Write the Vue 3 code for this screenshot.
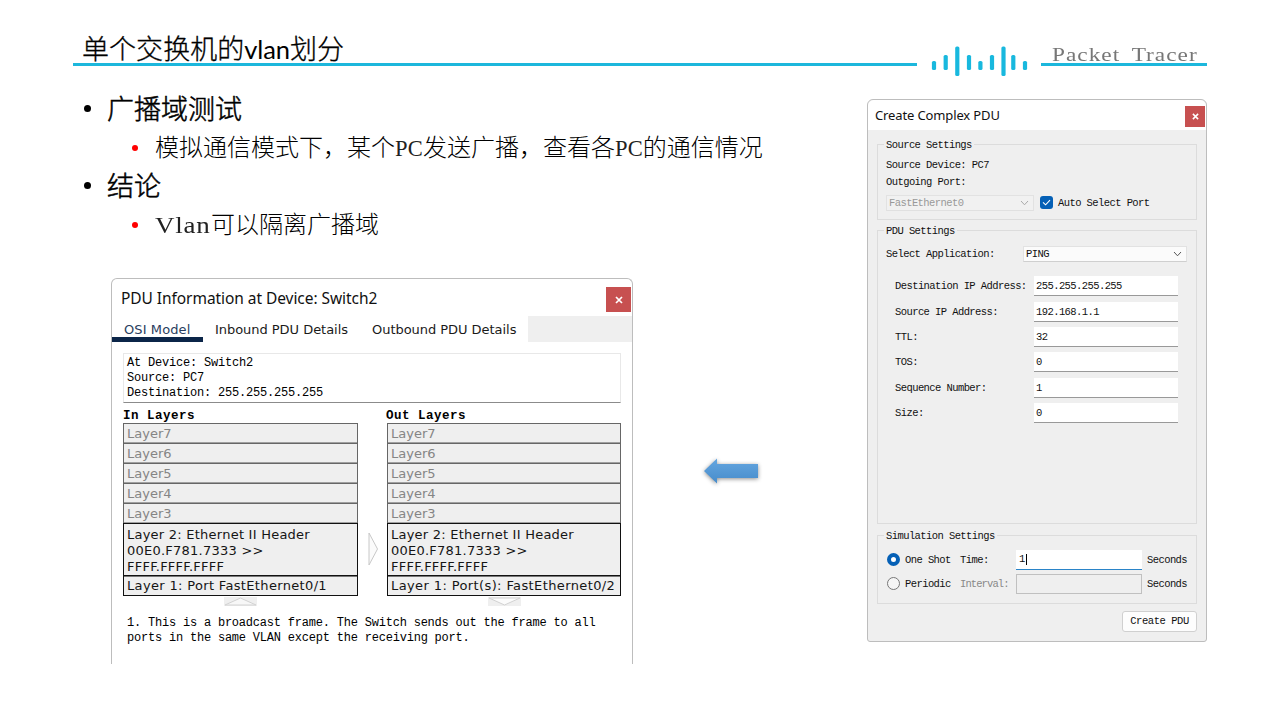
<script setup>
const bars = [
  [934, 61, 70], [945.7, 55, 70], [957.3, 46.5, 76], [969, 55, 70], [980.4, 61, 70],
  [992, 55, 70], [1003.5, 46.5, 76], [1013.3, 55, 70], [1025, 61, 70],
]
const upper = ['Layer7', 'Layer6', 'Layer5', 'Layer4', 'Layer3']
const fields = [
  ['Destination IP Address:', '255.255.255.255'],
  ['Source IP Address:', '192.168.1.1'],
  ['TTL:', '32'],
  ['TOS:', '0'],
  ['Sequence Number:', '1'],
  ['Size:', '0'],
]
</script>

<template>
  <div class="slide">
    <header class="head">
      <div class="title"><span>单个交换机的<span class="latin">vlan</span>划分</span></div>
      <svg class="wave" width="124" height="40" viewBox="917 40 124 40">
        <rect v-for="b in bars" :key="b[0]" :x="b[0] - 2.1" :y="b[1]" width="4.2" :height="b[2] - b[1]" rx="1.6" fill="#18b8de" />
      </svg>
      <div class="brand"><span>Packet Tracer</span></div>
    </header>

    <main class="content">
      <section class="left">
        <ul class="bullets">
          <li class="major"><i></i><span>广播域测试</span></li>
          <li class="minor"><i></i><span>模拟通信模式下，某个<b>PC</b>发送广播，查看各<b>PC</b>的通信情况</span></li>
          <li class="major"><i></i><span>结论</span></li>
          <li class="minor"><i></i><span><b class="wide">Vlan</b>可以隔离广播域</span></li>
        </ul>

        <div class="row">
          <div class="win info">
            <div class="bar">
              <span class="wtitle">PDU Information at Device: Switch2</span>
              <span class="close"><svg width="8" height="8" viewBox="0 0 8 8"><path d="M1 1L7 7M7 1L1 7" stroke="#fff" stroke-width="1.7" /></svg></span>
            </div>
            <nav class="tabs">
              <span class="tab on">OSI Model</span>
              <span class="tab t2">Inbound PDU Details</span>
              <span class="tab t3">Outbound PDU Details</span>
              <span class="rest"></span>
            </nav>
            <div class="summary">
              <div>At Device: Switch2</div>
              <div>Source: PC7</div>
              <div>Destination: 255.255.255.255</div>
            </div>
            <div class="stacks">
              <div class="stack">
                <h4>In Layers</h4>
                <div v-for="l in upper" :key="l" class="layer off">{{ l }}</div>
                <div class="layer big">Layer 2: Ethernet II Header<br>00E0.F781.7333 &gt;&gt;<br>FFFF.FFFF.FFFF</div>
                <div class="layer last">Layer 1: Port FastEthernet0/1</div>
                <svg class="tri" width="33" height="9" viewBox="0 0 33 9"><rect width="33" height="9" fill="#efefef" /><path d="M1 8L16.5 1L32 8Z" fill="#f7f7f7" stroke="#d2d2d2" /></svg>
              </div>
              <svg class="next" width="11" height="34" viewBox="0 0 11 34"><path d="M1 1L9.5 17L1 33Z" fill="#fbfbfb" stroke="#c8c8c8" /></svg>
              <div class="stack out">
                <h4>Out Layers</h4>
                <div v-for="l in upper" :key="l" class="layer off">{{ l }}</div>
                <div class="layer big">Layer 2: Ethernet II Header<br>00E0.F781.7333 &gt;&gt;<br>FFFF.FFFF.FFFF</div>
                <div class="layer last">Layer 1: Port(s): FastEthernet0/2</div>
                <svg class="tri" width="33" height="9" viewBox="0 0 33 9"><rect width="33" height="9" fill="#efefef" /><path d="M1 1L16.5 8L32 1Z" fill="#fbfbfb" stroke="#d2d2d2" /></svg>
              </div>
            </div>
            <div class="note">1. This is a broadcast frame. The Switch sends out the frame to all<br>ports in the same VLAN except the receiving port.</div>
          </div>
          <svg class="arrow" width="64" height="36" viewBox="0 0 64 36">
            <defs><linearGradient id="ag" x1="0" y1="0" x2="0" y2="1"><stop offset="0" stop-color="#65a6e0" /><stop offset="1" stop-color="#468ccb" /></linearGradient></defs>
            <path d="M4 17L17 4.500V10H58V24H17V29.500Z" fill="url(#ag)" />
          </svg>
        </div>
      </section>

      <section class="win pdu">
        <div class="bar">
          <span class="wtitle">Create Complex PDU</span>
          <span class="close"><svg width="7" height="7" viewBox="0 0 8 8"><path d="M1 1L7 7M7 1L1 7" stroke="#fff" stroke-width="1.7" /></svg></span>
        </div>
        <div class="body">
          <div class="group g1">
            <div class="legend"><span>Source Settings</span></div>
            <div class="line l1">Source Device: PC7</div>
            <div class="line l2">Outgoing Port:</div>
            <div class="port">
              <span class="select dis">FastEthernet0<svg width="9" height="6" viewBox="0 0 9 6"><path d="M1 1L4.500 4.800L8 1" fill="none" stroke="#aaa" /></svg></span>
              <span class="check"><svg width="9" height="7" viewBox="0 0 9 7"><path d="M1 3.300L3.600 5.800L8 1.200" fill="none" stroke="#fff" stroke-width="1.100" /></svg></span>
              <span>Auto Select Port</span>
            </div>
          </div>
          <div class="group g2">
            <div class="legend"><span>PDU Settings</span></div>
            <div class="app">
              <span>Select Application:</span>
              <span class="select">PING<svg width="9" height="6" viewBox="0 0 9 6"><path d="M1 1L4.500 4.800L8 1" fill="none" stroke="#555" /></svg></span>
            </div>
            <div v-for="f in fields" :key="f[0]" class="field"><span>{{ f[0] }}</span><span class="input">{{ f[1] }}</span></div>
          </div>
          <div class="group g3">
            <div class="legend"><span>Simulation Settings</span></div>
            <div class="sim"><span class="radio on"></span><span class="opt">One Shot</span><span class="lab">Time:</span><span class="tin">1<i class="caret"></i></span><span>Seconds</span></div>
            <div class="sim s2"><span class="radio"></span><span class="opt">Periodic</span><span class="lab gray">Interval:</span><span class="tin dis"></span><span>Seconds</span></div>
          </div>
          <div class="btn">Create PDU</div>
        </div>
      </section>
    </main>
  </div>
</template>

<style>
body { background: #fff; }
</style>

<style scoped>
* { box-sizing: border-box; }
.slide { width: 1280px; height: 720px; background: #fff; overflow: hidden; color: #000; white-space: nowrap; }
.head { display: flex; height: 99px; padding-left: 73px; align-items: flex-start; }
.title { width: 844px; height: 66px; border-bottom: 3px solid #1cb7dc; padding: 28px 0 0 9px; font: 300 27px/40px "Noto Sans CJK SC", sans-serif; letter-spacing: 0.05px; }
.title > span { -webkit-text-stroke: 0.3px #000; }
.title .latin { font-family: Lato, sans-serif; font-size: 25.500px; font-weight: 400; -webkit-text-stroke: 0 transparent; letter-spacing: -0.1px; }
.wave { margin-top: 40px; }
.brand { width: 166px; height: 66px; border-bottom: 3px solid #1cb7dc; padding: 44px 0 0 11px; font: 18.500px/22px "Liberation Serif", serif; letter-spacing: 0.8px; word-spacing: 4px; color: #777; }
.brand span { display: inline-block; transform: scaleX(1.26); transform-origin: 0 50%; }
.content { display: flex; }
.left { width: 867px; }
.bullets { list-style: none; margin: 0; padding: 0; height: 179px; }
.bullets li { display: flex; align-items: center; height: 38.5px; }
.bullets i { border-radius: 50%; flex: none; }
.major { padding-left: 84px; font: 400 27px/38px "Noto Sans CJK SC", sans-serif; }
.major i { width: 7px; height: 7px; background: #000; margin-right: 16px; }
.major span { font-weight: 300; -webkit-text-stroke: 0.5px #000; position: relative; top: -10px; }
.major i { position: relative; top: -10px; }
.minor { padding-left: 132px; font: 300 24px/38px "Noto Sans CJK SC", sans-serif; }
.minor i, .minor span { position: relative; top: -9px; }
.minor span { top: -11px; }
.minor i { width: 6px; height: 6px; background: #f00; margin-right: 17px; }
.minor b { font: 400 22.500px/30px "Liberation Serif", serif; letter-spacing: 0.2px; color: #222; }
.minor .wide { display: inline-block; width: 56px; letter-spacing: 0.6px; transform: scaleX(1.2); transform-origin: 0 50%; }
.row { display: flex; padding-left: 111px; }
.win { border: 1px solid #bdbdbd; background: #fff; }
.info { width: 522px; height: 386px; border-bottom: 0; border-radius: 6px 6px 0 0; }
.bar { display: flex; justify-content: space-between; }
.info .bar { height: 37px; padding: 8px 1px 0 9px; }
.wtitle { font: 16px/22px "Noto Sans", sans-serif; color: #111; }
.info .wtitle { font-size: 15.500px; line-height: 22px; letter-spacing: -0.060px; }
.close { display: flex; align-items: center; justify-content: center; background: #c75050; }
.info .close { width: 25px; height: 25px; }
.tabs { display: flex; height: 26px; font: 13px/28px "DejaVu Sans", sans-serif; color: #1a1a1a; }
.tab.on { width: 91px; padding-left: 12px; color: #2a3e60; border-bottom: 5px solid #0b2548; letter-spacing: 0.1px; }
.t2 { width: 157px; padding-left: 12px; letter-spacing: -0.04px; }
.t3 { width: 168px; padding-left: 12px; letter-spacing: -0.04px; }
.rest { flex: 1; background: #efefef; }
.summary { margin: 11px 11px 0; height: 50px; border: 1px solid #e8e8e8; border-bottom: 1px solid #8b8b8b; padding: 2px 3px 0; font: 12px/15px "Liberation Mono", monospace; letter-spacing: -0.2px; }
.stacks { display: flex; padding-left: 11px; height: 203px; }
.stack { width: 235px; }
.stack.out { width: 234px; margin-left: 8px; }
h4 { margin: 0; height: 20px; font: bold 12.500px/26px "Liberation Mono", monospace; letter-spacing: 0.5px; }
.out h4 { margin-left: -1px; }
.layer { border: 1px solid #666; background: #efefef; padding-left: 3px; font: 13px/19px "DejaVu Sans", sans-serif; letter-spacing: 0.34px; height: 21px; margin-bottom: -1px; color: #151515; }
.off { color: #858585; letter-spacing: 0; box-shadow: inset 0 -1px #a0a0a0; }
.big { height: 53px; line-height: 16px; letter-spacing: 0.24px; padding-top: 3px; border-color: #111; position: relative; }
.last { border-color: #111; height: 21px; margin-top: 0; line-height: 20px; box-shadow: inset 0 1px #777; }
.out .last { letter-spacing: 0.39px; }
.tri { display: block; margin: 2px 0 0 101px; }
.next { margin: 129px 0 0 10px; }
.note { padding: 10px 0 0 15px; font: 12px/15px "Liberation Mono", monospace; letter-spacing: -0.210px; }
.arrow { margin: 176px 0 0 67px; filter: drop-shadow(0 1px 2px rgba(0,0,0,.45)); }
.pdu { width: 340px; height: 543px; background: #efefef; border-radius: 6px 6px 3px 3px; font: 10.500px/14px "Liberation Mono", monospace; letter-spacing: -0.58px; color: #111; }
.pdu .bar { height: 30px; background: #fff; border-radius: 6px 6px 0 0; padding: 5px 1px 0 7px; }
.pdu .wtitle { font-size: 13px; line-height: 20px; letter-spacing: -0.13px; }
.pdu .close { width: 20px; height: 21px; margin-top: 1px; }
.body { padding: 14px 9px 0; }
.group { border: 1px solid #dcdcdc; }
.legend { height: 14px; margin: -7px 0 0 6px; }
.legend span { background: #efefef; padding: 0 2px; }
.g1 { height: 76px; }
.line { padding-left: 8px; height: 17px; }
.l1 { margin-top: 6px; }
.port { display: flex; align-items: center; padding-left: 8px; height: 17px; margin-top: 2px; }
.select { display: flex; align-items: center; justify-content: space-between; background: #fbfbfb; border: 1px solid #e2e2e2; border-bottom-color: #cfcfcf; height: 16px; padding: 0 4px 0 2px; width: 164px; }
.select.dis { width: 148px; background: #f1f1f1; color: #999; border-bottom-color: #e0e0e0; }
.check { width: 13px; height: 13px; margin: 0 5px 0 6px; border-radius: 3px; background: #0560b6; display: flex; align-items: center; justify-content: center; }
.g2 { height: 294px; margin-top: 10px; }
.app { display: flex; align-items: center; justify-content: space-between; padding: 0 9px 0 8px; height: 18px; margin: 7px 0 13.300px; }
.field { display: flex; padding-left: 17px; height: 25.400px; line-height: 21px; }
.field > span:first-child { width: 139px; }
.input { width: 144px; height: 20px; background: #fff; border-bottom: 1px solid #999; padding-left: 2px; }
.g3 { height: 69px; margin-top: 11px; }
.sim { display: flex; align-items: center; padding-left: 9px; height: 21px; margin-top: 6px; }
.sim.s2 { margin-top: 3px; }
.radio { width: 13px; height: 13px; border: 1px solid #777; border-radius: 50%; background: #f5f5f5; }
.radio.on { border: 4px solid #0560b6; background: #fff; }
.opt { width: 55px; margin-left: 5px; }
.lab { width: 56px; }
.gray { color: #888; letter-spacing: -0.9px; }
.tin { width: 126px; height: 20px; background: #fff; border-bottom: 1px solid #2a84c8; margin-right: 5px; padding-left: 3px; line-height: 20px; display: flex; align-items: center; }
.tin.dis { background: #efefef; border: 1px solid #c0c0c0; }
.caret { width: 1px; height: 11px; background: #000; margin-left: 1px; }
.btn { margin: 7px 0 0 245px; width: 75px; height: 21px; border: 1px solid #d0d0d0; border-radius: 3px; background: #fdfdfd; line-height: 19px; text-align: center; letter-spacing: -0.45px; }
</style>
